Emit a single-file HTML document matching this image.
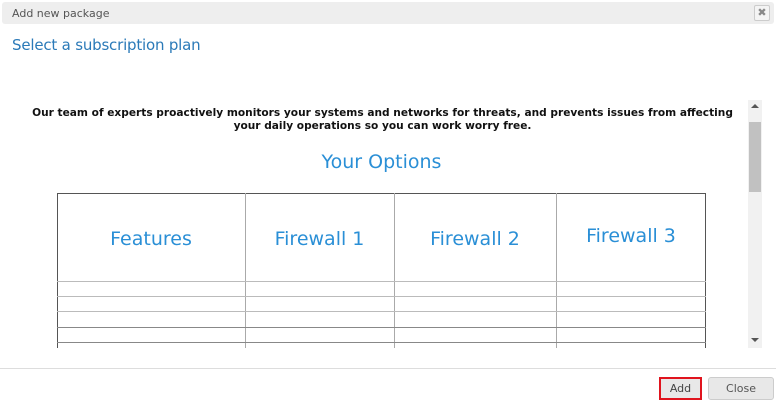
<!DOCTYPE html><html><head><style>
*{margin:0;padding:0;box-sizing:border-box}
body{width:776px;height:405px;background:#fff;font-family:"DejaVu Sans",Verdana,sans-serif;position:relative;overflow:hidden}
.a{position:absolute}
.hl{position:absolute;height:1px;background:#bbb;left:57px;width:649px}
.vl{position:absolute;width:1px;background:#aaa;top:193px;height:155px}
.th{position:absolute;top:195px;height:88px;display:flex;align-items:center;justify-content:center;color:#2a8fd6;font-size:19px}
</style></head><body>
<div class="a" style="left:2px;top:2px;width:772px;height:22px;background:#eee;border-radius:3px"></div>
<div class="a" style="left:12px;top:7px;font-size:11px;color:#555">Add new package</div>
<div class="a" style="left:754px;top:5px;width:16px;height:16px;border:1px solid #ccc;border-radius:2px;background:#f4f4f4;font-size:11px;color:#888;text-align:center;line-height:14px;font-weight:bold">✖</div>
<div class="a" style="left:12px;top:36px;font-size:15px;color:#2b7ab8;letter-spacing:-0.2px">Select a subscription plan</div>
<div class="a" style="left:20px;top:107px;width:725px;text-align:center;font-size:10.6px;font-weight:bold;color:#111;line-height:13px">Our team of experts proactively monitors your systems and networks for threats, and prevents issues from affecting your daily operations so you can work worry free.</div>
<div class="a" style="left:57px;top:151px;width:649px;text-align:center;font-size:19px;color:#2a8fd6">Your Options</div>
<div class="a" style="left:57px;top:193px;width:649px;height:1px;background:#555"></div>
<div class="a" style="left:57px;top:193px;width:1px;height:155px;background:#555"></div>
<div class="a" style="left:705px;top:193px;width:1px;height:155px;background:#555"></div>
<div class="vl" style="left:245px"></div><div class="vl" style="left:394px"></div><div class="vl" style="left:556px"></div>
<div class="hl" style="top:281px"></div><div class="hl" style="top:296px"></div><div class="hl" style="top:311px"></div><div class="hl" style="top:327px;background:#888"></div><div class="hl" style="top:342px;background:#888"></div>
<div class="th" style="left:57px;width:188px">Features</div>
<div class="th" style="left:245px;width:149px">Firewall 1</div>
<div class="th" style="left:394px;width:162px">Firewall 2</div>
<div class="th" style="left:556px;width:150px;top:192px">Firewall 3</div>
<div class="a" style="left:0;top:348px;width:748px;height:20px;background:#fff"></div>
<div class="a" style="left:748px;top:100px;width:14px;height:248px;background:#f1f1f1"></div>
<div class="a" style="left:749px;top:122px;width:12px;height:70px;background:#c1c1c1"></div>
<div class="a" style="left:751px;top:104px;width:0;height:0;border-left:4px solid transparent;border-right:4px solid transparent;border-bottom:4px solid #555"></div>
<div class="a" style="left:751px;top:338px;width:0;height:0;border-left:4px solid transparent;border-right:4px solid transparent;border-top:4px solid #555"></div>
<div class="a" style="left:0;top:368px;width:776px;height:1px;background:#ddd"></div>
<div class="a" style="left:659px;top:377px;width:43px;height:23px;border:2px solid #e0141e;background:#e8e8e8;font-size:11px;color:#444;text-align:center;line-height:19px">Add</div>
<div class="a" style="left:708px;top:377px;width:66px;height:23px;border:1px solid #ccc;border-radius:3px;background:#e8e8e8;font-size:11px;color:#555;text-align:center;line-height:21px">Close</div>
</body></html>
